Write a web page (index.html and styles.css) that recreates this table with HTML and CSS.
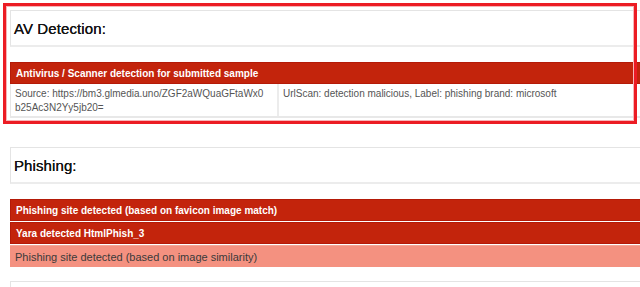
FILE: index.html
```html
<!DOCTYPE html>
<html>
<head>
<meta charset="utf-8">
<link rel="stylesheet" href="styles.css">
</head>
<body>
<div class="page">
  <section class="section">
    <div class="card"><h2 class="title">AV Detection:</h2></div>
    <div class="bar bar-dark bar-first">Antivirus / Scanner detection for submitted sample</div>
    <div class="row">
      <div class="cell cell-left"><span class="line">Source: https://bm3.glmedia.uno/ZGF2aWQuaGFtaWx0</span><span class="line">b25Ac3N2Yy5jb20=</span></div>
      <div class="cell cell-right"><span class="line">UrlScan: detection malicious, Label: phishing brand: microsoft</span></div>
    </div>
  </section>
  <section class="section section-second">
    <div class="card"><h2 class="title">Phishing:</h2></div>
    <div class="bars">
      <div class="bar bar-dark">Phishing site detected (based on favicon image match)</div>
      <div class="bar bar-dark">Yara detected HtmlPhish_3</div>
      <div class="bar bar-light">Phishing site detected (based on image similarity)</div>
    </div>
    <div class="card card-next"></div>
  </section>
  <div class="highlight"></div>
</div>
</body>
</html>
```
FILE: styles.css
```css
html, body {
  margin: 0;
  padding: 0;
  background: #fff;
  overflow: hidden;
}
body {
  font-family: "Liberation Sans", Arial, sans-serif;
  width: 640px;
  height: 287px;
}
.page {
  position: relative;
  padding: 10px 0 0 10px;
  width: 700px;
}
.section {
  display: flex;
  flex-direction: column;
}
.section-second {
  margin-top: 29px;
}
.card {
  box-sizing: border-box;
  height: 37px;
  border: 1px solid #e4e4e4;
  border-bottom: 2px solid #ececec;
  background: #fff;
  display: flex;
  align-items: center;
  padding-left: 3px;
}
.title {
  margin: 0;
  font-size: 15px;
  font-weight: normal;
  color: #151515;
  letter-spacing: 0.1px;
  text-shadow: 0 0 0.4px #000;
}
.bar {
  box-sizing: border-box;
  height: 22px;
  display: flex;
  align-items: center;
  padding-left: 5px;
  font-size: 11px;
}
.bar-first {
  margin-top: 15px;
}
.bar-dark {
  background: #c3240c;
  border: 1px solid #b41a08;
  color: #fff;
  font-weight: bold;
  font-size: 10px;
}
.bar-light {
  background: #f49180;
  border-top: 1px solid #f3a596;
  color: #3a3a3a;
}
.bars {
  display: flex;
  flex-direction: column;
  gap: 1px;
  margin-top: 15px;
}
.row {
  display: grid;
  grid-template-columns: 266px 1fr;
  border: 1px solid #e6e6e6;
  border-top: none;
  border-bottom: 2px solid #e8e8e8;
  height: 34px;
  box-sizing: border-box;
}
.cell {
  font-size: 10px;
  line-height: 14px;
  color: #555555;
  padding: 3px 0 0 4px;
  display: flex;
  flex-direction: column;
}
.line {
  white-space: nowrap;
}
.cell-right {
  border-left: 2px solid #ececec;
  padding-left: 4px;
}
.card-next {
  margin-top: 14px;
  height: 10px;
  border-bottom: none;
}
.highlight {
  position: absolute;
  left: 3px;
  top: 3px;
  width: 628px;
  height: 115px;
  border: 3px solid #ec1c24;
  box-shadow: inset 0 0 0 1px #f7b5b8;
  pointer-events: none;
}
```
